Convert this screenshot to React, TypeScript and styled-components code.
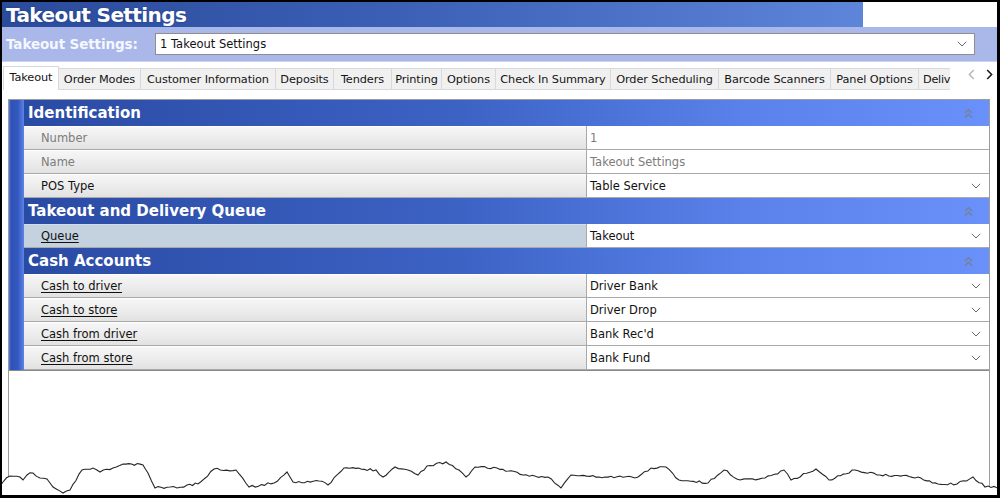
import React from "react";
import styled, { createGlobalStyle } from "styled-components";

const GlobalStyle = createGlobalStyle`
  html, body {
    margin: 0;
    padding: 0;
    background: #ffffff;
  }
  body {
    font-family: "DejaVu Sans", Verdana, sans-serif;
  }
  * {
    box-sizing: border-box;
  }
`;

type Row = {
  label: string;
  value: string;
  muted?: boolean;
  link?: boolean;
  selected?: boolean;
  dropdown?: boolean;
};

type Section = {
  title: string;
  rows: Row[];
};

const sections: Section[] = [
  {
    title: "Identification",
    rows: [
      { label: "Number", value: "1", muted: true },
      { label: "Name", value: "Takeout Settings", muted: true },
      { label: "POS Type", value: "Table Service", dropdown: true },
    ],
  },
  {
    title: "Takeout and Delivery Queue",
    rows: [
      { label: "Queue", value: "Takeout", link: true, selected: true, dropdown: true },
    ],
  },
  {
    title: "Cash Accounts",
    rows: [
      { label: "Cash to driver", value: "Driver Bank", link: true, dropdown: true },
      { label: "Cash to store", value: "Driver Drop", link: true, dropdown: true },
      { label: "Cash from driver", value: "Bank Rec'd", link: true, dropdown: true },
      { label: "Cash from store", value: "Bank Fund", link: true, dropdown: true },
    ],
  },
];

const tabs = [
  { name: "Takeout", width: 56 },
  { name: "Order Modes", width: 83 },
  { name: "Customer Information", width: 136 },
  { name: "Deposits", width: 59 },
  { name: "Tenders", width: 59 },
  { name: "Printing", width: 51 },
  { name: "Options", width: 55 },
  { name: "Check In Summary", width: 116 },
  { name: "Order Scheduling", width: 109 },
  { name: "Barcode Scanners", width: 113 },
  { name: "Panel Options", width: 89 },
];

// rough outline of the torn bottom edge, page coordinates
const tornKeys: [number, number][] = [
  [0, 486], [3, 482], [10, 476], [20, 477], [23, 480], [27, 475], [33, 473],
  [40, 478], [47, 479], [53, 487], [63, 493], [70, 490], [82, 470], [93, 468],
  [100, 472], [113, 468], [123, 464], [143, 465], [148, 473], [155, 488],
  [170, 487], [177, 488], [187, 485], [198, 484], [214, 469], [236, 470],
  [249, 487], [274, 483], [287, 472], [293, 482], [319, 481], [328, 485],
  [344, 468], [376, 470], [383, 477], [395, 467], [408, 470], [418, 475],
  [427, 466], [446, 462], [459, 470], [466, 477], [475, 467], [497, 468],
  [523, 475], [548, 477], [561, 488], [571, 475], [599, 477], [638, 477],
  [651, 468], [666, 467], [679, 480], [708, 483], [724, 470], [740, 480],
  [765, 478], [784, 470], [791, 480], [816, 469], [829, 480], [855, 470],
  [880, 475], [918, 477], [938, 484], [957, 484], [973, 477], [985, 487],
  [1000, 488],
];

const buildTornLine = () => {
  let seed = 11;
  const rand = () => {
    seed = (seed * 16807) % 2147483647;
    return seed / 2147483647;
  };
  const pts: string[] = [];
  for (let i = 0; i < tornKeys.length - 1; i++) {
    const [x0, y0] = tornKeys[i];
    const [x1, y1] = tornKeys[i + 1];
    const steps = Math.max(1, Math.round((x1 - x0) / 3));
    for (let s = 0; s < steps; s++) {
      const t = s / steps;
      const jitter = s === 0 ? 0 : (rand() - 0.5) * 2.4;
      pts.push(`${(x0 + (x1 - x0) * t).toFixed(1)},${(y0 + (y1 - y0) * t + jitter).toFixed(1)}`);
    }
  }
  const [lx, ly] = tornKeys[tornKeys.length - 1];
  pts.push(`${lx},${ly}`);
  return pts.join(" ");
};

const tornLine = buildTornLine();

const ChevronDown = () => (
  <svg width="10" height="6" viewBox="0 0 10 6">
    <path d="M0.8 0.8 L5 5 L9.2 0.8" fill="none" stroke="#6b6b6b" strokeWidth="1" />
  </svg>
);

const DoubleUp = () => (
  <svg width="9" height="11" viewBox="0 0 9 11">
    <path d="M1 5 L4.5 1.6 L8 5" fill="none" stroke="#7383a3" strokeWidth="1.6" />
    <path d="M1 9.6 L4.5 6.2 L8 9.6" fill="none" stroke="#7383a3" strokeWidth="1.6" />
  </svg>
);

const Arrow = ({ left, color }: { left?: boolean; color: string }) => (
  <svg width="7" height="11" viewBox="0 0 7 11">
    <path
      d={left ? "M5.8 1 L1.4 5.5 L5.8 10" : "M1.2 1 L5.6 5.5 L1.2 10"}
      fill="none"
      stroke={color}
      strokeWidth="1.6"
    />
  </svg>
);

const App = () => {
  return (
    <>
      <GlobalStyle />
      <Frame>
        <TitleBar>
          <TitleText>Takeout Settings</TitleText>
        </TitleBar>
        <SelectorBar>
          <SelectorLabel>Takeout Settings:</SelectorLabel>
          <SelectBox>
            <span>1 Takeout Settings</span>
            <ChevronDown />
          </SelectBox>
        </SelectorBar>
        <TabArea>
          <TabStrip>
            {tabs.map((tab, i) => (
              <Tab key={tab.name} $width={tab.width} $active={i === 0}>
                {tab.name}
              </Tab>
            ))}
            <ClippedTab>Deliv</ClippedTab>
          </TabStrip>
          <TabArrows>
            <Arrow left color="#b9b9b9" />
            <Arrow color="#1e1e1e" />
          </TabArrows>
        </TabArea>
        <Body>
          <Panel>
            <PropertyGrid>
              <Stripe />
              <SectionList>
                {sections.map((section) => (
                  <React.Fragment key={section.title}>
                    <SectionHeader>
                      <span>{section.title}</span>
                      <DoubleUp />
                    </SectionHeader>
                    {section.rows.map((row) => (
                      <GridRow key={row.label}>
                        <LabelCell $muted={row.muted} $link={row.link} $selected={row.selected}>
                          {row.label}
                        </LabelCell>
                        <ValueCell $muted={row.muted}>
                          <span>{row.value}</span>
                          {row.dropdown && <ChevronDown />}
                        </ValueCell>
                      </GridRow>
                    ))}
                  </React.Fragment>
                ))}
              </SectionList>
            </PropertyGrid>
          </Panel>
        </Body>
        <TornEdge viewBox="0 455 1000 40" preserveAspectRatio="none">
          <polygon points={`${tornLine} 1000,495 0,495`} fill="#ffffff" />
          <polyline points={tornLine} fill="none" stroke="#262626" strokeWidth="1.1" />
        </TornEdge>
      </Frame>
    </>
  );
};

const Frame = styled.div`
  position: relative;
  width: 1000px;
  height: 498px;
  border-style: solid;
  border-color: #000000;
  border-width: 2px 3px 3px 2px;
  background: #ffffff;
  display: flex;
  flex-direction: column;
  overflow: hidden;
`;

const TitleBar = styled.div`
  height: 25px;
  display: flex;
  flex-shrink: 0;
  background: #ffffff;
`;

const TitleText = styled.div`
  width: 861px;
  height: 100%;
  padding-left: 4px;
  display: flex;
  align-items: center;
  background: linear-gradient(90deg, #2b4b9b 0%, #3a5fb5 45%, #5d85da 100%);
  color: #ffffff;
  font-size: 20px;
  font-weight: bold;
  letter-spacing: -0.6px;
  text-shadow: 0 0 2px rgba(20, 40, 100, 0.5);
`;

const SelectorBar = styled.div`
  height: 35px;
  flex-shrink: 0;
  display: flex;
  align-items: center;
  padding-left: 4px;
  background: #a9b7e9;
  border-bottom: 1px solid #c9d2f2;
`;

const SelectorLabel = styled.div`
  width: 149px;
  color: #f5f7ff;
  font-size: 13.5px;
  font-weight: bold;
  letter-spacing: -0.1px;
`;

const SelectBox = styled.div`
  width: 820px;
  height: 22px;
  display: flex;
  align-items: center;
  justify-content: space-between;
  padding: 0 7px 0 4px;
  background: #ffffff;
  border: 1px solid #8e8e8e;
  font-size: 11.5px;
  color: #111111;
`;

const TabArea = styled.div`
  height: 28px;
  flex-shrink: 0;
  display: flex;
  align-items: flex-end;
  padding-left: 1px;
`;

const TabStrip = styled.div`
  width: 957px;
  height: 25px;
  display: flex;
  align-items: flex-end;
  overflow: hidden;
`;

const Tab = styled.div<{ $width: number; $active?: boolean }>`
  flex: 0 0 ${({ $width }) => $width}px;
  height: ${({ $active }) => ($active ? 24 : 22)}px;
  display: flex;
  align-items: center;
  justify-content: center;
  margin-left: -1px;
  padding-bottom: ${({ $active }) => ($active ? 2 : 0)}px;
  background: ${({ $active }) => ($active ? "#ffffff" : "#f0f0f0")};
  border: 1px solid #d9d9d9;
  border-bottom: ${({ $active }) => ($active ? "none" : "1px solid #d9d9d9")};
  font-size: 11.3px;
  letter-spacing: -0.1px;
  color: #141414;
  white-space: nowrap;
  &:first-child {
    margin-left: 0;
  }
`;

const ClippedTab = styled.div`
  flex: 0 0 31px;
  height: 22px;
  display: flex;
  align-items: center;
  margin-left: -1px;
  padding-left: 4px;
  background: #f0f0f0;
  border: 1px solid #d9d9d9;
  border-right: none;
  font-size: 11.3px;
  letter-spacing: -0.3px;
  color: #141414;
  white-space: nowrap;
`;

const TabArrows = styled.div`
  flex: 1;
  height: 25px;
  display: flex;
  align-items: center;
  justify-content: space-between;
  padding: 0 4px 6px 8px;
`;

const Body = styled.div`
  flex: 1;
  display: flex;
  padding: 9px 7px 0 6px;
`;

const Panel = styled.div`
  flex: 1;
  border: 1px solid #9c9c9c;
  border-bottom: none;
`;

const PropertyGrid = styled.div`
  display: flex;
  border-bottom: 1px solid #8a8a8a;
`;

const Stripe = styled.div`
  width: 15px;
  flex-shrink: 0;
  background: linear-gradient(90deg, #5a7fe0 0px, #2e52b4 2px, #3358c0 9px, #5d83e6 15px);
`;

const SectionList = styled.div`
  flex: 1;
  display: flex;
  flex-direction: column;
`;

const SectionHeader = styled.div`
  height: 26px;
  display: flex;
  align-items: center;
  justify-content: space-between;
  padding: 0 16px 0 4px;
  background: linear-gradient(90deg, #2a4ba4 0%, #3c62c4 45%, #5a82ea 75%, #6a90f9 100%);
  color: #ffffff;
  font-size: 15px;
  font-weight: bold;
`;

const GridRow = styled.div`
  height: 24px;
  display: flex;
`;

const LabelCell = styled.div<{ $muted?: boolean; $link?: boolean; $selected?: boolean }>`
  flex: 0 0 563px;
  display: flex;
  align-items: center;
  padding-left: 17px;
  background: ${({ $selected }) =>
    $selected ? "#c4d1de" : "linear-gradient(180deg, #f7f7f7 0%, #ebebeb 60%, #e2e2e2 100%)"};
  border-right: 1px solid #a9a9a9;
  border-bottom: 1px solid #a9a9a9;
  box-shadow: inset 0 1px 0 ${({ $selected }) => ($selected ? "#d3dde8" : "#ffffff")};
  font-size: 11.5px;
  color: ${({ $muted }) => ($muted ? "#7c7c7c" : "#111111")};
  text-decoration: ${({ $link }) => ($link ? "underline" : "none")};
  text-underline-offset: 2px;
`;

const ValueCell = styled.div<{ $muted?: boolean }>`
  flex: 1;
  display: flex;
  align-items: center;
  justify-content: space-between;
  padding: 0 8px 0 3px;
  background: #ffffff;
  border-bottom: 1px solid #a9a9a9;
  font-size: 11.5px;
  color: ${({ $muted }) => ($muted ? "#7c7c7c" : "#111111")};
`;

const TornEdge = styled.svg`
  position: absolute;
  left: -2px;
  bottom: 0;
  width: 1000px;
  height: 40px;
`;

export default App;
